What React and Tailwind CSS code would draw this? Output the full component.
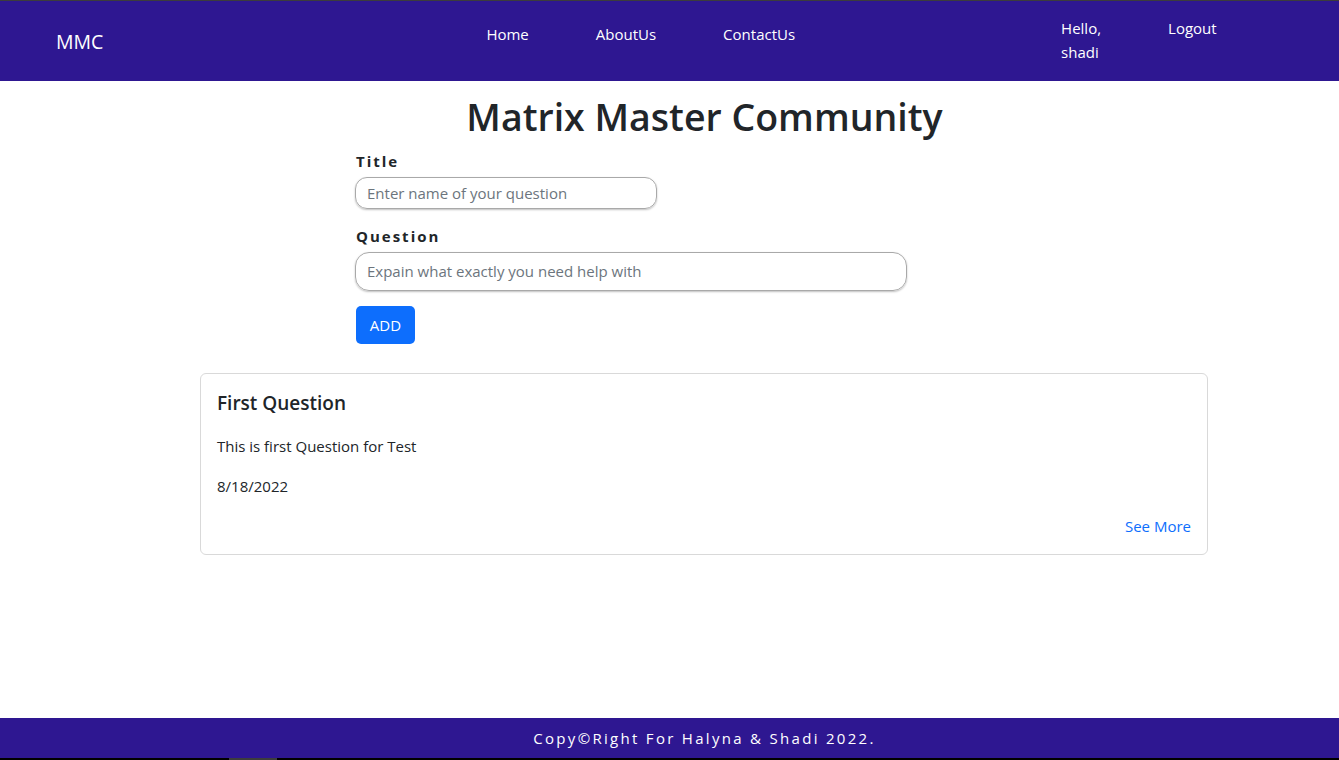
export default function App() {
  return (
    <div className="relative flex h-[760px] w-full flex-col bg-white text-[#212529]" style={{ fontFamily: '"Open Sans", "Noto Sans", sans-serif' }}>
      <div className="h-px w-full bg-[#3c3c3c]" />
      <nav className="flex h-[80px] items-start bg-[#2e1791] text-white">
        <div className="w-[56px]" />
        <div className="mt-[27px] text-[19.5px] leading-[28px]">MMC</div>
        <div className="ml-[383px] mt-[21px] flex gap-[67px] text-[15px] leading-[24px]">
          <span>Home</span>
          <span>AboutUs</span>
          <span>ContactUs</span>
        </div>
        <div className="ml-[266px] mt-[15px] w-[60px] text-[15px] leading-[24px]">
          Hello,<br />shadi
        </div>
        <div className="ml-[47px] mt-[15px] text-[15px] leading-[24px]">Logout</div>
      </nav>
      <main className="flex flex-1 flex-col">
        <h1 className="mt-[12px] pl-[70px] text-center text-[37.5px] font-semibold leading-[48px]">Matrix Master Community</h1>
        <div className="ml-[355px] mt-[8px] flex flex-col">
          <label className="pl-px text-[15px] font-bold leading-[24px] tracking-[2px]">Title</label>
          <div className="mt-[4px] flex h-[32px] w-[302px] items-center rounded-[12px] border border-[#a9a9a9] px-[11px] text-[15px] text-[#6c757d] shadow-[0_1px_2px_rgba(0,0,0,0.25)]">
            Enter name of your question
          </div>
          <label className="mt-[15px] pl-px text-[15px] font-bold leading-[24px] tracking-[2px]">Question</label>
          <div className="mt-[4px] flex h-[39px] w-[552px] items-center rounded-[14px] border border-[#a9a9a9] px-[11px] text-[15px] text-[#6c757d] shadow-[0_1px_2px_rgba(0,0,0,0.25)]">
            Expain what exactly you need help with
          </div>
          <button className="ml-px mt-[15px] flex h-[38px] w-[59px] items-center justify-center rounded-[5px] bg-[#0d6efd] text-[15px] text-white">
            ADD
          </button>
        </div>
        <div className="ml-[200px] mt-[29px] flex h-[182px] w-[1008px] flex-col rounded-[6px] border border-[#d9d9d9] px-[16px] pt-[15px]">
          <div className="text-[19px] font-semibold leading-[28px]">First Question</div>
          <p className="mt-[17px] text-[15px] leading-[24px]">This is first Question for Test</p>
          <p className="mt-[16px] text-[15px] leading-[24px]">8/18/2022</p>
          <div className="mt-[16px] text-right text-[15px] leading-[24px] text-[#0d6efd]">See More</div>
        </div>
      </main>
      <footer className="flex h-[40px] items-center justify-center bg-[#2e1791] pl-[70px] text-[15px] tracking-[2.3px] text-white">
        Copy©Right For Halyna &amp; Shadi 2022.
      </footer>
      <div className="flex h-[2px] w-full bg-black">
        <div className="ml-[229px] h-full w-[48px] bg-[#3c3c3c]" />
      </div>
    </div>
  );
}
